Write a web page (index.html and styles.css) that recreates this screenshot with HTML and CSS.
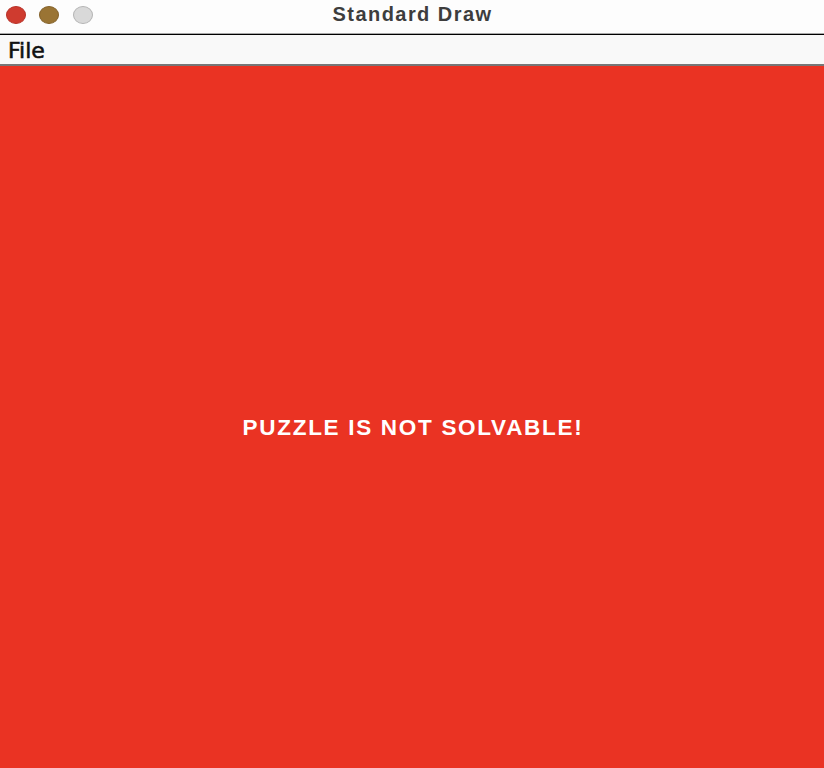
FILE: index.html
```html
<!DOCTYPE html>
<html>
<head>
<meta charset="utf-8">
<title>Standard Draw</title>
<link rel="stylesheet" href="styles.css">
</head>
<body>
<div class="window">
  <header class="titlebar">
    <div class="lights">
      <span class="light close"></span>
      <span class="light min"></span>
      <span class="light max"></span>
    </div>
    <div class="title">Standard Draw</div>
    <div class="spacer"></div>
  </header>
  <nav class="menubar">
    <span class="menu-item">File</span>
  </nav>
  <main class="canvas">
    <p class="message">PUZZLE IS NOT SOLVABLE!</p>
  </main>
</div>
</body>
</html>
```

FILE: styles.css
```css
html, body {
  margin: 0;
  padding: 0;
  background: #ea3323;
}
.window {
  width: 824px;
  height: 768px;
  display: flex;
  flex-direction: column;
  overflow: hidden;
}
.titlebar {
  height: 33px;
  background: #fdfdfd;
  border-bottom: 1px solid #a8a8a8;
  display: grid;
  grid-template-columns: 1fr auto 1fr;
  align-items: center;
  flex: none;
}
.lights {
  display: flex;
  gap: 13px;
  padding-left: 6px;
  margin-top: -4px;
}
.light {
  width: 20px;
  height: 18px;
  border-radius: 50%;
  box-sizing: border-box;
}
.close { background: #cf3b2f; border: 1px solid #b8332a; }
.min { background: #9a7434; border: 1px solid #84622b; }
.max { background: #d9d9d9; border: 1px solid #b4b4b4; margin-left: 1px; }
.title {
  font-family: "Liberation Sans", Arial, sans-serif;
  font-weight: bold;
  font-size: 20px;
  letter-spacing: 1.45px;
  color: #3d3d3d;
  margin-top: -5px;
  padding-left: 1px;
}
.menubar {
  height: 29px;
  background: #f9f9f9;
  border-top: 1px solid #000;
  border-bottom: 2px solid #777;
  display: flex;
  align-items: center;
  flex: none;
  box-sizing: content-box;
}
.menu-item {
  font-family: "DejaVu Sans", sans-serif;
  font-size: 22px;
  color: #111;
  padding-left: 8px;
  -webkit-text-stroke: 0.6px #111;
  margin-top: 1px;
}
.canvas {
  flex: 1;
  background: #ea3323;
  display: flex;
  justify-content: center;
  padding-top: 351px;
  box-sizing: border-box;
}
.message {
  margin: 0;
  font-family: "Liberation Sans", Arial, sans-serif;
  font-weight: bold;
  font-size: 22.5px;
  line-height: 22.5px;
  letter-spacing: 1.7px;
  color: #ffffff;
  padding-left: 2px;
}
```
